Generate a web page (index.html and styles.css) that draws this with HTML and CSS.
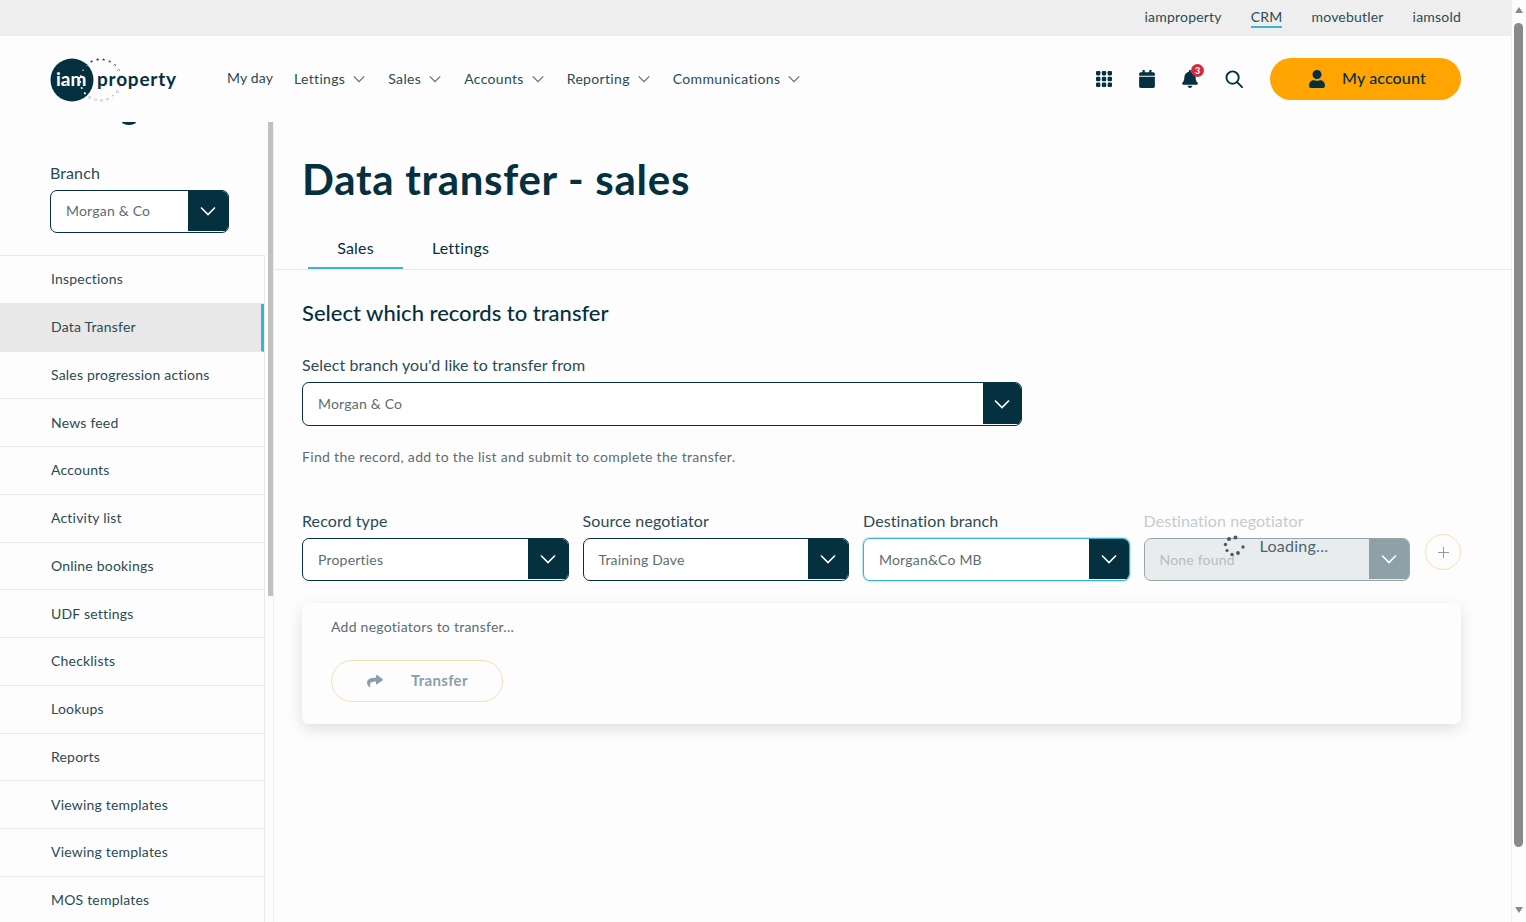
FILE: index.html
```html
<!DOCTYPE html>
<html lang="en">
<head>
<meta charset="utf-8">
<title>Data transfer - sales</title>
<link rel="stylesheet" href="styles.css">
</head>
<body>
<svg class="defs" width="0" height="0" aria-hidden="true">
  <symbol id="chev" viewBox="0 0 16 10"><polyline points="1,1.5 8,8.5 15,1.5" fill="none" stroke="currentColor" stroke-width="1.6"/></symbol>
</svg>
<div class="app">
  <div class="page">
    <div class="topbar">
      <a class="toplink">iamproperty</a>
      <a class="toplink toplink-active">CRM</a>
      <a class="toplink">movebutler</a>
      <a class="toplink">iamsold</a>
    </div>
    <header class="header">
      <svg class="logo" width="128" height="46" viewBox="0 0 128 46">
        <circle cx="22" cy="23" r="21.5" fill="#04303f"/>
        <circle cx="50.500" cy="23" r="20.5" fill="none" stroke="#04303f" stroke-width="2.2" stroke-linecap="round" stroke-dasharray="0 6.2"/>
        <circle cx="50.500" cy="23" r="20.5" fill="none" stroke="#fff" stroke-width="2.2" stroke-linecap="round" stroke-dasharray="0 6.2" class="logo-ring-in"/>
        <text x="6" y="29" class="logo-iam">iam</text>
        <text x="47" y="29" class="logo-prop">property</text>
      </svg>
      <nav class="nav">
        <a class="nav-item nav-first">My day</a>
        <a class="nav-item">Lettings <svg class="nav-chev"><use href="#chev"/></svg></a>
        <a class="nav-item">Sales <svg class="nav-chev"><use href="#chev"/></svg></a>
        <a class="nav-item">Accounts <svg class="nav-chev"><use href="#chev"/></svg></a>
        <a class="nav-item">Reporting <svg class="nav-chev"><use href="#chev"/></svg></a>
        <a class="nav-item">Communications <svg class="nav-chev"><use href="#chev"/></svg></a>
      </nav>
      <div class="tools">
        <svg class="tool" width="16" height="16" viewBox="0 0 16 16" fill="#04303f">
          <rect x="0" y="0" width="4.400" height="4.400" rx="1.300"/><rect x="5.800" y="0" width="4.400" height="4.400" rx="1.300"/><rect x="11.600" y="0" width="4.400" height="4.400" rx="1.300"/>
          <rect x="0" y="5.800" width="4.400" height="4.400" rx="1.300"/><rect x="5.800" y="5.800" width="4.400" height="4.400" rx="1.300"/><rect x="11.600" y="5.800" width="4.400" height="4.400" rx="1.300"/>
          <rect x="0" y="11.600" width="4.400" height="4.400" rx="1.300"/><rect x="5.800" y="11.600" width="4.400" height="4.400" rx="1.300"/><rect x="11.600" y="11.600" width="4.400" height="4.400" rx="1.300"/>
        </svg>
        <svg class="tool" width="16" height="18" viewBox="0 0 448 512" fill="#04303f"><path d="M12 192h424c6.600 0 12 5.400 12 12v260c0 26.500-21.500 48-48 48H48c-26.500 0-48-21.500-48-48V204c0-6.600 5.400-12 12-12zm436-44v-36c0-26.500-21.500-48-48-48h-48V12c0-6.600-5.400-12-12-12h-40c-6.600 0-12 5.400-12 12v52H160V12c0-6.600-5.400-12-12-12h-40c-6.600 0-12 5.400-12 12v52H48C21.500 64 0 85.500 0 112v36c0 6.600 5.400 12 12 12h424c6.600 0 12-5.400 12-12z"/></svg>
        <span class="bell">
          <svg width="16" height="18" viewBox="0 0 448 512" fill="#04303f"><path d="M224 512c35.320 0 63.970-28.650 63.970-64H160.030c0 35.350 28.650 64 63.970 64zm215.390-149.710c-19.320-20.760-55.470-51.990-55.470-154.290 0-77.700-54.480-139.900-127.940-155.160V32c0-17.670-14.320-32-31.980-32s-31.980 14.330-31.980 32v20.840C118.560 68.100 64.080 130.300 64.080 208c0 102.300-36.150 133.530-55.470 154.290-6 6.450-8.660 14.160-8.610 21.710.11 16.400 12.980 32 32.100 32h383.800c19.120 0 32-15.600 32.100-32 .05-7.550-2.610-15.270-8.610-21.710z"/></svg>
          <span class="badge">3</span>
        </span>
        <svg class="tool" width="18" height="18" viewBox="0 0 19 19" fill="none" stroke="#04303f" stroke-width="2"><circle cx="8" cy="8" r="6.500"/><line x1="12.800" y1="12.800" x2="18" y2="18" stroke-linecap="round"/></svg>
      </div>
      <button class="account">
        <svg width="16" height="18" viewBox="0 0 448 512" fill="#04303f"><path d="M224 256c70.700 0 128-57.300 128-128S294.700 0 224 0 96 57.300 96 128s57.300 128 128 128zm89.600 32h-16.700c-22.200 10.200-46.900 16-72.900 16s-50.600-5.800-72.900-16h-16.700C60.200 288 0 348.200 0 422.400V464c0 26.500 21.500 48 48 48h352c26.500 0 48-21.500 48-48v-41.600c0-74.200-60.200-134.400-134.400-134.400z"/></svg>
        <span class="account-text">My account</span>
      </button>
    </header>
    <div class="body">
      <aside class="sidebar">
        <div class="side-inner">
          <div class="clipped-g"></div>
          <div class="side-branch">
            <div class="label">Branch</div>
            <div class="select select-side"><span class="select-val">Morgan &amp; Co</span><span class="select-btn"><svg class="chev"><use href="#chev"/></svg></span></div>
          </div>
          <ul class="side-list">
            <li class="side-item">Inspections</li>
            <li class="side-item side-active">Data Transfer</li>
            <li class="side-item">Sales progression actions</li>
            <li class="side-item">News feed</li>
            <li class="side-item">Accounts</li>
            <li class="side-item">Activity list</li>
            <li class="side-item">Online bookings</li>
            <li class="side-item">UDF settings</li>
            <li class="side-item">Checklists</li>
            <li class="side-item">Lookups</li>
            <li class="side-item">Reports</li>
            <li class="side-item">Viewing templates</li>
            <li class="side-item">Viewing templates</li>
            <li class="side-item">MOS templates</li>
          </ul>
        </div>
        <div class="side-scroll"><div class="side-thumb"></div></div>
      </aside>
      <main class="content">
        <h1 class="title">Data transfer - sales</h1>
        <div class="tabs">
          <a class="tab tab-active">Sales</a>
          <a class="tab">Lettings</a>
        </div>
        <section class="panel">
          <h2 class="section-title">Select which records to transfer</h2>
          <div class="label">Select branch you'd like to transfer from</div>
          <div class="select select-wide"><span class="select-val">Morgan &amp; Co</span><span class="select-btn"><svg class="chev"><use href="#chev"/></svg></span></div>
          <p class="help">Find the record, add to the list and submit to complete the transfer.</p>
          <div class="fields">
            <div class="field">
              <div class="label">Record type</div>
              <div class="select"><span class="select-val">Properties</span><span class="select-btn"><svg class="chev"><use href="#chev"/></svg></span></div>
            </div>
            <div class="field">
              <div class="label">Source negotiator</div>
              <div class="select"><span class="select-val">Training Dave</span><span class="select-btn"><svg class="chev"><use href="#chev"/></svg></span></div>
            </div>
            <div class="field">
              <div class="label">Destination branch</div>
              <div class="select select-focus"><span class="select-val">Morgan&amp;Co MB</span><span class="select-btn"><svg class="chev"><use href="#chev"/></svg></span></div>
            </div>
            <div class="field field-loading">
              <div class="label label-off">Destination negotiator</div>
              <div class="select select-off"><span class="select-val">None found</span><span class="select-btn"><svg class="chev"><use href="#chev"/></svg></span></div>
              <div class="loading">
                <svg width="24" height="24" viewBox="0 0 24 24" fill="#3f5c68"><circle cx="12.500" cy="2.500" r="2"/><circle cx="6" cy="4" r="2"/><circle cx="2.500" cy="9.500" r="1.700"/><circle cx="4" cy="15.500" r="1.600"/><circle cx="9" cy="19.500" r="1.700"/><circle cx="15" cy="18" r="1.900"/><circle cx="20" cy="12" r="1.700"/></svg>
                <span>Loading...</span>
              </div>
            </div>
            <button class="add" aria-label="Add"><svg width="11" height="11" viewBox="0 0 11 11" stroke="#8aa0a8" stroke-width="1"><line x1="5.500" y1="0" x2="5.500" y2="11"/><line x1="0" y1="5.500" x2="11" y2="5.500"/></svg></button>
          </div>
          <div class="card">
            <p class="card-text">Add negotiators to transfer...</p>
            <button class="transfer">
              <svg width="16" height="14" viewBox="0 0 512 512" fill="#8aa0a8" preserveAspectRatio="none"><path d="M503.691 189.836L327.687 37.851C312.281 24.546 288 35.347 288 56.015v80.053C127.371 137.907 0 170.100 0 322.326c0 61.441 39.581 122.309 83.333 154.132 13.653 9.931 33.111-2.533 28.077-18.631C66.066 312.814 132.917 274.316 288 272.085V360c0 20.700 24.300 31.453 39.687 18.164l176.004-152c11.071-9.562 11.086-26.753 0-36.328z"/></svg>
              <span class="transfer-text">Transfer</span>
            </button>
          </div>
        </section>
      </main>
    </div>
  </div>
  <div class="scrollbar">
    <span class="arrow-up"></span>
    <div class="thumb"></div>
    <span class="arrow-down"></span>
  </div>
</div>
</body>
</html>
```
FILE: styles.css
```css
* { box-sizing: border-box; }
html, body { margin: 0; height: 100%; overflow: hidden; }
body { font-family: "Lato", "Liberation Sans", sans-serif; color: #04303f; background: #fdfdfd; font-size: 14px; }
.defs { position: absolute; }
.app { display: flex; height: 922px; width: 1526px; }
.page { width: 1511px; display: flex; flex-direction: column; flex: none; }

.topbar { height: 36px; background: #eeeeee; display: flex; justify-content: flex-end; align-items: flex-start; gap: 29px; padding: 8px 50px 0 0; flex: none; }
.toplink { color: #2c4a55; font-size: 14px; line-height: 18px; letter-spacing: .2px; padding-bottom: 1px; border-bottom: 2px solid transparent; height: 20px; }
.toplink-active { border-bottom-color: #3ab4d0; }

.header { height: 86px; display: flex; align-items: center; padding: 0 50px 0 50px; flex: none; }
.logo { flex: none; margin-top: 1px; }
.logo-iam { font: 700 19px "Lato", sans-serif; fill: #fff; }
.logo-prop { font: 700 19px "Lato", sans-serif; fill: #04303f; letter-spacing: .78px; }
.logo-ring-in { clip-path: circle(21.500px at 22px 23px); }
.nav { display: flex; margin-left: 49px; gap: 23px; align-items: center; }
.nav-item { color: #2c4a55; font-size: 14px; line-height: 18px; letter-spacing: .33px; display: flex; align-items: center; gap: 8px; }
.nav-first { margin-top: -2px; margin-right: -2px; letter-spacing: .15px; }
.nav-chev { width: 12px; height: 8px; color: #5b7079; margin-left: 0; }
.tools { margin-left: auto; display: flex; align-items: center; gap: 27px; margin-right: 27px; }
.bell { position: relative; display: block; height: 18px; }
.bell svg { display: block; }
.badge { position: absolute; left: 9px; top: -6px; width: 13px; height: 13px; border-radius: 50%; background: #d8283f; color: #fff; font-size: 9px; font-weight: 700; line-height: 13px; text-align: center; }
.account { width: 191px; height: 42px; border-radius: 21px; border: 0; background: #ffa400; display: flex; align-items: center; padding: 0 0 0 39px; gap: 17px; color: #04303f; font: 500 16px "Lato", sans-serif; letter-spacing: .15px; flex: none; }
.account-text { margin-top: -4px; }

.body { flex: 1; display: flex; min-height: 0; }
.sidebar { width: 274px; flex: none; display: flex; overflow: hidden; border-right: 1px solid #eeeeee; }
.side-inner { width: 265px; flex: none; }
.clipped-g { width: 14px; height: 3px; margin-left: 122px; background: #04303f; border-radius: 0 0 50% 50% / 0 0 100% 100%; }
.side-branch { padding: 38px 36px 22px 50px; }
.side-branch .label { margin-bottom: 7px; }
.side-list { list-style: none; margin: 0; padding: 0; border-top: 1px solid #e8e8e8; border-right: 1px solid #e8e8e8; }
.side-item { height: 47.750px; padding: 0 0 1px 51px; display: flex; align-items: center; color: #2c4a55; font-size: 14px; letter-spacing: .2px; border-bottom: 1px solid #e8e8e8; }
.side-active { background: #e8e8e8; border-right: 3px solid #3ab4d0; }
.side-scroll { width: 9px; padding-left: 3px; }
.side-thumb { width: 6px; height: 474px; background: #c1c1c1; }

.content { flex: 1; min-width: 0; }
.title { margin: 0; padding: 32px 0 0 28px; font-size: 42px; line-height: 50px; font-weight: 700; color: #04303f; letter-spacing: .72px; }
.tabs { display: flex; height: 41px; margin-top: 25px; padding-left: 34px; gap: 10px; border-bottom: 1px solid #e8e8e8; }
.tab { width: 95px; height: 40px; color: #04303f; text-align: center; font-size: 16px; line-height: 24px; padding-top: 7px; letter-spacing: .2px; }
.tab-active { border-bottom: 2px solid #3ab4d0; }
.panel { padding: 29px 50px 0 28px; }
.section-title { margin: 0 0 28px; font-size: 22px; line-height: 28px; font-weight: 500; color: #04303f; }
.label { font-size: 16px; line-height: 20px; color: #2c4a55; letter-spacing: .1px; }
.select { height: 43px; display: flex; border: 1px solid #04303f; border-radius: 7px; background: #fff; overflow: hidden; }
.select-side { height: 43px; width: 179px; }
.select-wide { width: 720px; height: 44px; margin-top: 7px; }
.select-side .select-val, .select-wide .select-val { padding-bottom: 2px; }
.select-wide .select-btn { width: 38px; }
.select-val { flex: 1; padding-left: 15px; display: flex; align-items: center; color: #5e6c72; font-size: 14px; letter-spacing: .2px; white-space: nowrap; }
.select-btn { width: 40px; margin-bottom: 1px; background: #04303f; color: #fff; display: flex; align-items: center; justify-content: center; flex: none; }
.chev { width: 16px; height: 10px; }
.help { margin: 22px 0 0; font-size: 14px; line-height: 18px; color: #5e6c72; letter-spacing: .32px; }
.fields { display: flex; margin-top: 45px; gap: 14px; align-items: flex-start; }
.field { width: 266.500px; flex: none; }
.field .label { margin-bottom: 7px; }
.select-focus { border-color: #3ab4d0; box-shadow: 0 0 0 1px #bfe8f2; }
.field-loading { position: relative; }
.label-off { color: #c5cbce; }
.select-off { background: #e9eced; border-color: #9aa6ab; }
.select-off .select-val { color: #b6bcbf; }
.select-off .select-btn { background: #8ea1a8; }
.loading { position: absolute; left: 79px; top: 20px; display: flex; align-items: center; gap: 13px; font-size: 16px; letter-spacing: .27px; color: #4b6470; }
.loading svg { flex: none; margin-top: 4px; }
.add { width: 36px; height: 36px; margin: 23px 0 0 1px; padding: 0; border-radius: 50%; border: 1px solid #f5dfae; background: transparent; display: flex; align-items: center; justify-content: center; flex: none; }
.card { margin-top: 22px; height: 121px; padding: 15px 29px; border-radius: 6px; background: #fdfdfd; box-shadow: 0 5px 15px rgba(0,0,0,.12); }
.card-text { margin: 0; font-size: 14px; line-height: 18px; color: #5e6c72; letter-spacing: .25px; }
.transfer { margin-top: 24px; width: 172px; height: 42px; border-radius: 21px; border: 1px solid #f6dfb0; background: transparent; display: flex; align-items: center; padding: 0 0 0 35px; gap: 28px; color: #8aa0a8; font: 700 15px "Lato", sans-serif; letter-spacing: .3px; }
.transfer-text { margin-top: -2px; }

.scrollbar { width: 15px; flex: none; display: flex; flex-direction: column; align-items: center; padding-top: 7px; background: #fdfdfd; box-shadow: inset 1px 0 0 #f0f0f0; }
.arrow-up { width: 0; height: 0; border-left: 4px solid transparent; border-right: 4px solid transparent; border-bottom: 6px solid #8a8a8a; }
.arrow-down { width: 0; height: 0; border-left: 4px solid transparent; border-right: 4px solid transparent; border-top: 6px solid #8a8a8a; margin-top: 60px; }
.thumb { width: 9px; height: 824px; margin-top: 10px; background: #8a8a8a; border-radius: 5px; flex: none; }
```
